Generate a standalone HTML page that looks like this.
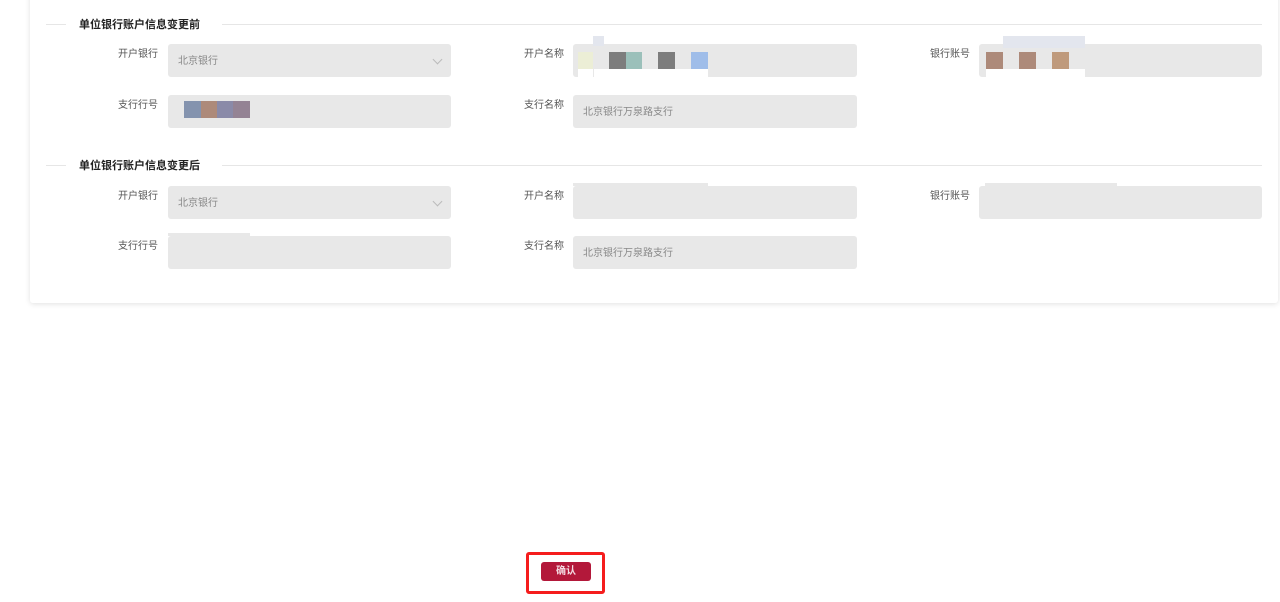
<!DOCTYPE html>
<html><head><meta charset="utf-8"><style>
body{margin:0;width:1280px;height:602px;background:#fff;position:relative;overflow:hidden;font-family:"Liberation Sans","Noto Sans CJK SC",sans-serif;}
.card{position:absolute;left:30px;top:-10px;width:1248px;height:313px;background:#fff;box-shadow:0 1px 6px rgba(0,0,0,.12);border-radius:3px;}
.line{position:absolute;height:1px;background:#e6e6e6;}
.title{position:absolute;font-size:11px;color:#222;line-height:14px;font-weight:bold;}
.lab{position:absolute;width:70px;text-align:right;font-size:10px;color:#555;line-height:14px;}
.in{position:absolute;height:33px;background:#e8e8e8;border-radius:3px;font-size:10px;color:#888;line-height:35px;box-sizing:border-box;padding-left:10px;}
.chev{position:absolute;right:10px;top:12px;width:6px;height:6px;border-right:1px solid #bbb;border-bottom:1px solid #bbb;transform:rotate(45deg);}
.b{position:absolute;}
</style></head><body>
<div class="card"></div>
<div class="line" style="left:46px;top:24px;width:20px"></div>
<div class="title" style="left:79px;top:18px">单位银行账户信息变更前</div>
<div class="line" style="left:222px;top:24px;width:1040px"></div>
<div class="lab" style="left:88px;top:48px">开户银行</div>
<div class="in" style="left:168px;top:44px;width:283px">北京银行<div class="chev"></div></div>
<div class="lab" style="left:494px;top:48px">开户名称</div>
<div class="in" style="left:573px;top:44px;width:284px"></div>
<div class="b" style="left:593px;top:36px;width:11px;height:10px;background:#e3e6ee"></div>
<div class="b" style="left:578px;top:52px;width:15px;height:17px;background:#eceed6"></div>
<div class="b" style="left:578px;top:69px;width:15px;height:8px;background:#fff"></div>
<div class="b" style="left:594px;top:69px;width:114px;height:8px;background:#fff"></div>
<div class="b" style="left:609px;top:52px;width:17px;height:17px;background:#7d7d7d"></div>
<div class="b" style="left:626px;top:52px;width:16px;height:17px;background:#9bc0ba"></div>
<div class="b" style="left:658px;top:52px;width:17px;height:17px;background:#7d7d7d"></div>
<div class="b" style="left:691px;top:52px;width:17px;height:17px;background:#9fbde9"></div>
<div class="lab" style="left:900px;top:48px">银行账号</div>
<div class="in" style="left:979px;top:44px;width:283px"></div>
<div class="b" style="left:1003px;top:36px;width:82px;height:12px;background:#e3e6ee"></div>
<div class="b" style="left:986px;top:69px;width:99px;height:8px;background:#fff"></div>
<div class="b" style="left:986px;top:52px;width:17px;height:17px;background:#ad8a7a"></div>
<div class="b" style="left:1019px;top:52px;width:17px;height:17px;background:#ad8a7a"></div>
<div class="b" style="left:1052px;top:52px;width:17px;height:17px;background:#bf9a7c"></div>
<div class="lab" style="left:88px;top:99px">支行行号</div>
<div class="in" style="left:168px;top:95px;width:283px"></div>
<div class="b" style="left:184px;top:101px;width:17px;height:17px;background:#8493ae"></div>
<div class="b" style="left:201px;top:101px;width:16px;height:17px;background:#ad8a7a"></div>
<div class="b" style="left:217px;top:101px;width:16px;height:17px;background:#8a8aa8"></div>
<div class="b" style="left:233px;top:101px;width:17px;height:17px;background:#948394"></div>
<div class="b" style="left:266px;top:128px;width:10px;height:6px;background:#fff"></div>
<div class="lab" style="left:494px;top:99px">支行名称</div>
<div class="in" style="left:573px;top:95px;width:284px">北京银行万泉路支行</div>
<div class="line" style="left:46px;top:165px;width:20px"></div>
<div class="title" style="left:79px;top:159px">单位银行账户信息变更后</div>
<div class="line" style="left:222px;top:165px;width:1040px"></div>
<div class="lab" style="left:88px;top:190px">开户银行</div>
<div class="in" style="left:168px;top:186px;width:283px">北京银行<div class="chev"></div></div>
<div class="lab" style="left:494px;top:190px">开户名称</div>
<div class="in" style="left:573px;top:186px;width:284px"></div>
<div class="b" style="left:573px;top:183px;width:135px;height:3px;background:#e8e8e8"></div>
<div class="lab" style="left:900px;top:190px">银行账号</div>
<div class="in" style="left:979px;top:186px;width:283px"></div>
<div class="b" style="left:985px;top:183px;width:132px;height:3px;background:#e8e8e8"></div>
<div class="b" style="left:1003px;top:219px;width:98px;height:3px;background:#fff"></div>
<div class="lab" style="left:88px;top:240px">支行行号</div>
<div class="in" style="left:168px;top:236px;width:283px"></div>
<div class="b" style="left:168px;top:233px;width:82px;height:3px;background:#e8e8e8"></div>
<div class="lab" style="left:494px;top:240px">支行名称</div>
<div class="in" style="left:573px;top:236px;width:284px">北京银行万泉路支行</div>
<div class="b" style="left:526px;top:552px;width:73px;height:36px;border:3px solid #f51d1d;border-radius:3px"></div>
<div class="b" style="left:541px;top:562px;width:50px;height:19px;background:#b3183a;border-radius:3px;color:#f4dbe3;font-size:10px;text-align:center;line-height:19px;font-weight:bold">确认</div>
</body></html>
